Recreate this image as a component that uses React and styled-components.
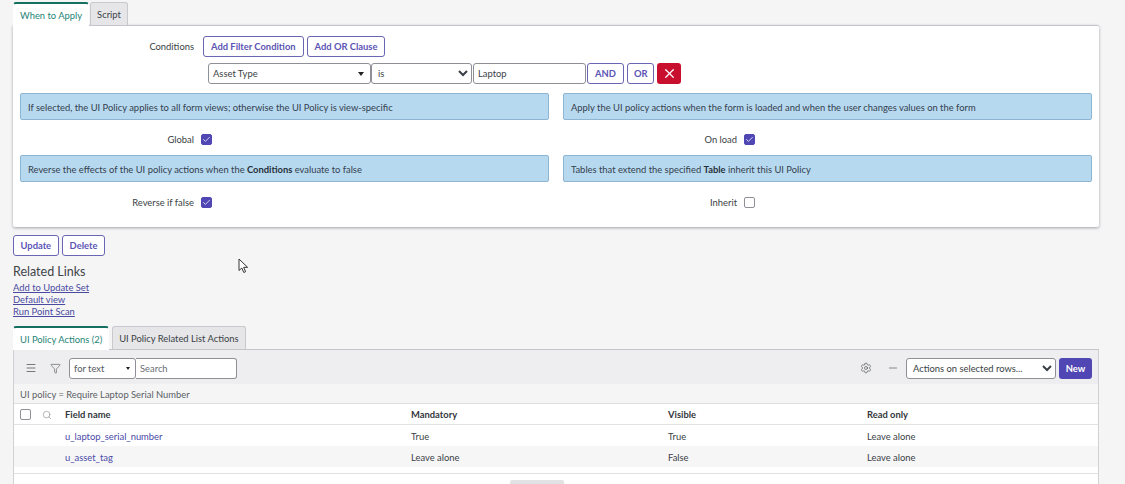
import React from 'react';
import styled, { createGlobalStyle } from 'styled-components';
import { Settings, Minus, Filter, Menu, Search, X, Check } from 'lucide-react';

const GlobalStyle = createGlobalStyle`
  html, body {
    margin: 0;
    height: 100%;
    background: #f5f5f6;
    overflow: hidden;
  }
  body {
    font-family: Lato, "Open Sans", sans-serif;
    font-size: 9.4px;
    color: #3a3f45;
  }
`;

const Page = styled.div`
  position: relative;
  width: 1125px;
  height: 484px;
  padding: 2px 26px 0 13px;
  box-sizing: border-box;
  overflow: hidden;
`;

const TabBar = styled.div`
  display: flex;
  height: 23px;
  gap: 1px;
  align-items: flex-end;
`;

const Tab = styled.div`
  height: ${(p) => (p.$active ? '24px' : '23px')};
  box-sizing: border-box;
  display: flex;
  align-items: center;
  padding: 0 6px;
  border-radius: 3px 3px 0 0;
  color: ${(p) => (p.$active ? '#1f8476' : '#3a3f45')};
  background: ${(p) => (p.$active ? '#fff' : '#e6e6e8')};
  border-top: ${(p) => (p.$active ? '2px solid #14705f' : '1px solid #c9c9cd')};
  border-left: 1px solid ${(p) => (p.$active ? '#fff' : '#c9c9cd')};
  border-right: 1px solid ${(p) => (p.$active ? '#fff' : '#c9c9cd')};
  margin-bottom: ${(p) => (p.$active ? '-1px' : '0')};
  position: relative;
  z-index: 1;
`;

const Card = styled.div`
  background: #fff;
  height: 202px;
  box-sizing: border-box;
  border-top: 1px solid #c4c5ca;
  border-radius: 0 2px 2px 2px;
  box-shadow: 0 1px 3px rgba(60, 60, 70, 0.45);
  padding: 10px 7px 0;
`;

const ConditionsRow = styled.div`
  display: flex;
  align-items: center;
  height: 21px;
`;

const FieldLabel = styled.div`
  width: 174px;
  text-align: right;
  flex: none;
`;

const OutlineButton = styled.button`
  height: 21px;
  box-sizing: border-box;
  padding: 0 ${(p) => p.$pad || 7}px;
  margin-left: ${(p) => p.$ml || 0}px;
  background: #fff;
  border: 1px solid #6a65b4;
  border-radius: 3px;
  font-family: inherit;
  font-size: 9.4px;
  font-weight: 700;
  color: #5b54b4;
`;

const FilterRow = styled.div`
  display: flex;
  align-items: center;
  height: 21px;
  margin: 6px 0 0 188px;
`;

const FakeSelect = styled.div`
  position: relative;
  width: ${(p) => p.$width}px;
  height: 21px;
  box-sizing: border-box;
  display: flex;
  align-items: center;
  padding-left: 4px;
  background: #fff;
  border: 1px solid #8e9096;
  border-radius: 3px;
  &::after {
    content: '';
    position: absolute;
    right: ${(p) => p.$caret || 6}px;
    top: 8px;
    border-left: ${(p) => (p.$tiny ? 2 : 3)}px solid transparent;
    border-right: ${(p) => (p.$tiny ? 2 : 3)}px solid transparent;
    border-top: ${(p) => (p.$tiny ? 3 : 4)}px solid #222;
  }
`;

const NativeSelect = styled.select`
  width: ${(p) => p.$width}px;
  height: 21px;
  box-sizing: border-box;
  padding-left: 2px;
  background: #fff;
  border: 1px solid #8e9096;
  border-radius: 3px;
  font-family: inherit;
  font-size: 9.4px;
  color: #3a3f45;
`;

const ValueInput = styled.input`
  width: ${(p) => p.$width}px;
  height: 21px;
  margin-left: ${(p) => p.$ml || 0}px;
  box-sizing: border-box;
  padding: 0 4px;
  background: #fff;
  border: 1px solid #8e9096;
  border-left-width: ${(p) => (p.$joined ? 0 : 1)}px;
  border-radius: ${(p) => (p.$joined ? '0 3px 3px 0' : '3px')};
  font-family: inherit;
  font-size: 9.4px;
  color: #3a3f45;
  &::placeholder {
    color: #6b6f75;
    opacity: 1;
  }
`;

const RemoveButton = styled.button`
  width: 24px;
  height: 21px;
  margin-left: 3px;
  padding: 0;
  display: flex;
  align-items: center;
  justify-content: center;
  background: #c8102e;
  border: 0;
  border-radius: 3px;
  color: #fff;
`;

const FormGrid = styled.div`
  display: grid;
  grid-template-columns: 529px 529px;
  column-gap: 14px;
  margin-top: 9px;
`;

const InfoBox = styled.div`
  height: 27px;
  box-sizing: border-box;
  display: flex;
  align-items: center;
  padding: 1px 7px 0;
  background: #b7d9f0;
  border: 1px solid #8db5d2;
  border-radius: 2px;
  color: #33404c;
  white-space: pre;
  b {
    font-weight: 700;
    color: #26303a;
  }
`;

const CheckRow = styled.div`
  display: flex;
  align-items: center;
  gap: 7px;
  height: ${(p) => p.$height}px;
  padding-top: ${(p) => p.$pt || 0}px;
  box-sizing: border-box;
`;

const CheckBox = styled.span`
  width: 11px;
  height: 11px;
  flex: none;
  display: flex;
  align-items: center;
  justify-content: center;
  box-sizing: border-box;
  border-radius: 2px;
  color: #fff;
  background: ${(p) => (p.$checked ? '#5147b4' : '#fff')};
  border: 1px solid ${(p) => (p.$checked ? '#5147b4' : '#8e9096')};
`;

const ActionRow = styled.div`
  display: flex;
  gap: 3px;
  margin-top: 8px;
`;

const RelatedTitle = styled.div`
  margin-top: 8px;
  font-size: 12.5px;
  line-height: 15px;
  color: #3f4449;
`;

const LinkList = styled.div`
  margin-top: 3px;
  display: flex;
  flex-direction: column;
`;

const RelatedLink = styled.a`
  line-height: 12px;
  color: #4a4aa0;
  text-decoration: underline;
`;

const SecondTabs = styled(TabBar)`
  margin-top: 8px;
  gap: 3px;
`;

const ListPanel = styled.div`
  border-top: 1px solid #c4c5ca;
  border-left: 1px solid #d0d1d5;
  border-right: 1px solid #d0d1d5;
  background: #fff;
  height: 140px;
`;

const Toolbar = styled.div`
  height: 34px;
  box-sizing: border-box;
  display: flex;
  align-items: center;
  background: #eeeef0;
  padding: 2px 6px 0 11px;
  color: #55595f;
`;

const ToolIcon = styled.span`
  display: flex;
  width: ${(p) => p.$width}px;
  flex: none;
`;

const Spacer = styled.div`
  flex: 1;
`;

const NewButton = styled.button`
  width: 33px;
  height: 21px;
  margin-left: 3px;
  padding: 0;
  background: #5147b4;
  border: 0;
  border-radius: 3px;
  font-family: inherit;
  font-size: 9.4px;
  font-weight: 700;
  color: #fff;
`;

const Breadcrumb = styled.div`
  height: 20px;
  display: flex;
  align-items: center;
  padding: 1px 0 0 6px;
  background: #f5f5f6;
  border-bottom: 1px solid #dfdfe2;
  box-sizing: border-box;
  color: #5b5f65;
`;

const Row = styled.div`
  display: grid;
  grid-template-columns: 51px 346px 257px 199px 1fr;
  align-items: center;
  height: 21px;
  padding-top: 1px;
  box-sizing: border-box;
  background: ${(p) => (p.$alt ? '#f6f6f7' : '#fff')};
  border-bottom: ${(p) => (p.$header ? '1px solid #e2e2e5' : '0')};
`;

const SelectCell = styled.div`
  display: flex;
  align-items: center;
  gap: 11px;
  padding-left: 6px;
  color: #8a8d92;
`;

const HeaderCell = styled.div`
  font-weight: 700;
  color: #33373c;
`;

const FieldLink = styled.a`
  color: #4a4aa8;
`;

const TableEnd = styled.div`
  height: 6px;
  border-bottom: 1px solid #e2e2e5;
`;

const ScrollThumb = styled.div`
  position: absolute;
  left: 510px;
  bottom: 0;
  width: 54px;
  height: 4px;
  border-radius: 2px 2px 0 0;
  background: #e2e2e4;
`;

const Cursor = styled.svg`
  position: absolute;
  left: 238px;
  top: 258px;
`;

const rows = [
  { name: 'u_laptop_serial_number', mandatory: 'True', visible: 'True', readOnly: 'Leave alone' },
  { name: 'u_asset_tag', mandatory: 'Leave alone', visible: 'False', readOnly: 'Leave alone' },
];

const Checked = () => (
  <CheckBox $checked>
    <Check size={9} strokeWidth={2} />
  </CheckBox>
);

export default function App() {
  return (
    <Page>
      <GlobalStyle />
      <TabBar>
        <Tab $active>When to Apply</Tab>
        <Tab>Script</Tab>
      </TabBar>
      <Card>
        <ConditionsRow>
          <FieldLabel>Conditions</FieldLabel>
          <OutlineButton $ml={9}>Add Filter Condition</OutlineButton>
          <OutlineButton $ml={3}>Add OR Clause</OutlineButton>
        </ConditionsRow>
        <FilterRow>
          <FakeSelect $width={163}>Asset Type</FakeSelect>
          <NativeSelect $width={101} defaultValue="is">
            <option>is</option>
          </NativeSelect>
          <ValueInput $width={113} $ml={1} defaultValue="Laptop" />
          <OutlineButton $ml={1} $pad={7}>AND</OutlineButton>
          <OutlineButton $ml={3} $pad={6}>OR</OutlineButton>
          <RemoveButton aria-label="Remove">
            <X size={15} strokeWidth={2} />
          </RemoveButton>
        </FilterRow>
        <FormGrid>
          <InfoBox>If selected, the UI Policy applies to all form views; otherwise the UI Policy is view-specific</InfoBox>
          <InfoBox>Apply the UI policy actions when the form is loaded and when the user changes values on the form</InfoBox>
          <CheckRow $height={35} $pt={4}>
            <FieldLabel>Global</FieldLabel>
            <Checked />
          </CheckRow>
          <CheckRow $height={35} $pt={4}>
            <FieldLabel>On load</FieldLabel>
            <Checked />
          </CheckRow>
          <InfoBox>Reverse the effects of the UI policy actions when the <b>Conditions</b> evaluate to false</InfoBox>
          <InfoBox>Tables that extend the specified <b>Table</b> inherit this UI Policy</InfoBox>
          <CheckRow $height={41}>
            <FieldLabel>Reverse if false</FieldLabel>
            <Checked />
          </CheckRow>
          <CheckRow $height={41}>
            <FieldLabel>Inherit</FieldLabel>
            <CheckBox />
          </CheckRow>
        </FormGrid>
      </Card>
      <ActionRow>
        <OutlineButton $pad={6.5}>Update</OutlineButton>
        <OutlineButton>Delete</OutlineButton>
      </ActionRow>
      <RelatedTitle>Related Links</RelatedTitle>
      <LinkList>
        <div><RelatedLink>Add to Update Set</RelatedLink></div>
        <div><RelatedLink>Default view</RelatedLink></div>
        <div><RelatedLink>Run Point Scan</RelatedLink></div>
      </LinkList>
      <SecondTabs>
        <Tab $active>UI Policy Actions (2)</Tab>
        <Tab>UI Policy Related List Actions</Tab>
      </SecondTabs>
      <ListPanel>
        <Toolbar>
          <ToolIcon $width={25}><Menu size={12} strokeWidth={1.6} /></ToolIcon>
          <ToolIcon $width={19}><Filter size={11} strokeWidth={1.4} /></ToolIcon>
          <FakeSelect $width={67} $caret={5} $tiny>for text</FakeSelect>
          <ValueInput $width={101} $joined placeholder="Search" />
          <Spacer />
          <ToolIcon $width={27}><Settings size={12} strokeWidth={1.4} /></ToolIcon>
          <ToolIcon $width={19}><Minus size={12} strokeWidth={1.4} /></ToolIcon>
          <NativeSelect $width={150} defaultValue="a">
            <option value="a">Actions on selected rows...</option>
          </NativeSelect>
          <NewButton>New</NewButton>
        </Toolbar>
        <Breadcrumb>UI policy = Require Laptop Serial Number</Breadcrumb>
        <Row $header>
          <SelectCell>
            <CheckBox />
            <Search size={10} strokeWidth={1.5} />
          </SelectCell>
          <HeaderCell>Field name</HeaderCell>
          <HeaderCell>Mandatory</HeaderCell>
          <HeaderCell>Visible</HeaderCell>
          <HeaderCell>Read only</HeaderCell>
        </Row>
        {rows.map((row, i) => (
          <Row key={row.name} $alt={i % 2 === 1}>
            <div />
            <div><FieldLink>{row.name}</FieldLink></div>
            <div>{row.mandatory}</div>
            <div>{row.visible}</div>
            <div>{row.readOnly}</div>
          </Row>
        ))}
        <TableEnd />
      </ListPanel>
      <ScrollThumb />
      <Cursor width="11" height="16" viewBox="0 0 11 16">
        <path d="M1 1 L1 12.5 L3.8 10 L5.8 14.5 L7.6 13.7 L5.7 9.3 L9.6 9.3 Z" fill="#fff" stroke="#333" strokeWidth="1" />
      </Cursor>
    </Page>
  );
}
